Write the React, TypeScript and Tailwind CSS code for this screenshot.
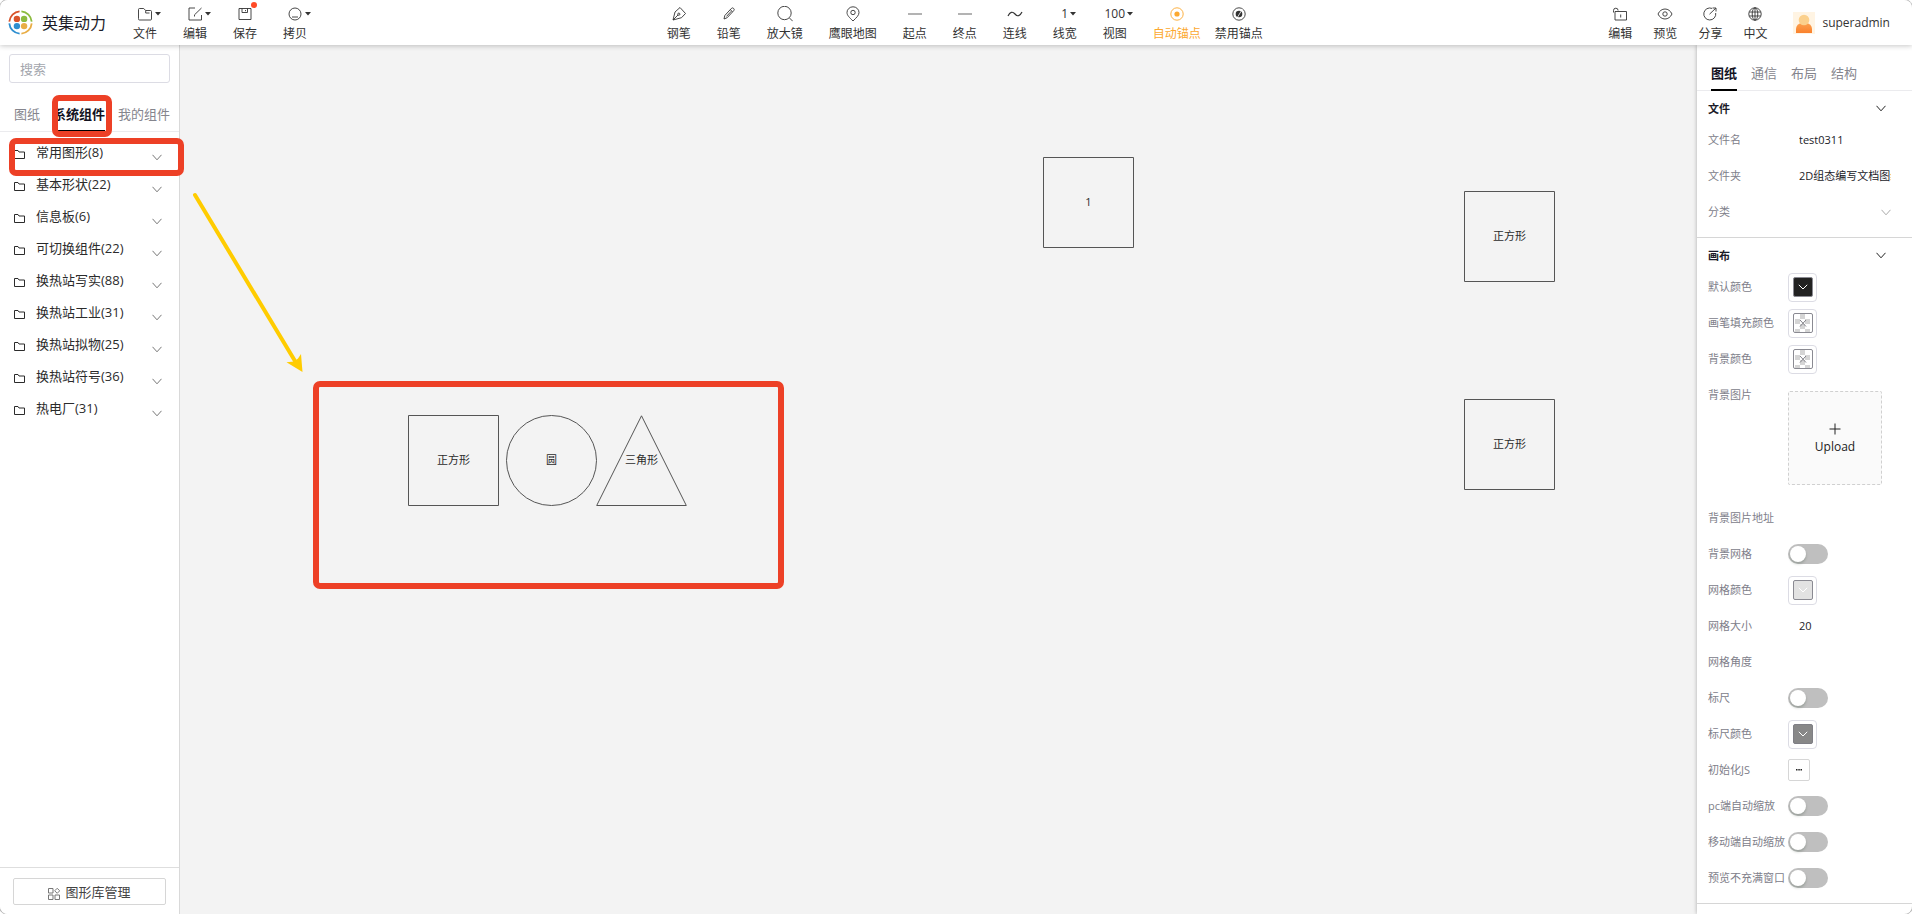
import React, { useState } from 'react';

const sans = "font-['Open_Sans','Noto_Sans_CJK_SC',sans-serif]";

type IconProps = { children: React.ReactNode; size?: number };

function Icon({ children, size = 16 }: IconProps) {
  return (
    <svg
      width={size}
      height={size}
      viewBox="0 0 16 16"
      fill="none"
      stroke="currentColor"
      strokeWidth="0.900"
      aria-hidden="true"
    >
      {children}
    </svg>
  );
}

const icons = {
  folder: (
    <Icon>
      <path d="M1.500 12.500v-9a1 1 0 0 1 1-1h4.200l2 2H13.500a1 1 0 0 1 1 1v7.500a1 1 0 0 1-1 1h-11a1 1 0 0 1-1-1zM8.700 4.500v2.500h3.800" />
    </Icon>
  ),
  edit: (
    <Icon>
      <path d="M8 2H2v12h12.500v-5" />
      <path d="M7.500 10.500v-1.700L14.500 2" />
    </Icon>
  ),
  save: (
    <Icon>
      <path d="M2 2.500h12v11H2zM5 2.500v4h5.500v-4M8.500 4v1.200" />
    </Icon>
  ),
  copy: (
    <Icon>
      <circle cx="8" cy="8" r="6" />
      <path d="M5 11h6" />
    </Icon>
  ),
  pen: (
    <Icon>
      <path d="M2 14 4 6l5-4.500 5.500 6-4 4.200z" />
      <path d="m2 14 5-5" />
      <circle cx="7.800" cy="8.200" r="1.100" />
    </Icon>
  ),
  pencil: (
    <Icon>
      <path d="M3 13l.8-3.500 6.500-7a1.600 1.600 0 0 1 2.400 2.200l-6.500 7zM9.200 3.600l2.300 2.100M10.300 5.200 5.500 10.400" />
    </Icon>
  ),
  magnifier: (
    <Icon>
      <circle cx="7.500" cy="7" r="6.700" />
      <path d="m12.500 12 3.200 3.200" />
    </Icon>
  ),
  pin: (
    <Icon>
      <path d="M8 15C4.500 11.500 2 9.500 2 6.500a6 5.700 0 0 1 12 0C14 9.500 11.500 11.500 8 15z" />
      <circle cx="8" cy="6.500" r="2.200" />
    </Icon>
  ),
  line: (
    <Icon>
      <path d="M1 8h14" stroke="#9a9a9a" strokeWidth="1.500" />
    </Icon>
  ),
  wave: (
    <Icon>
      <path d="M1 10C3 6 5.500 5 8 8s5 2 7-2" strokeWidth="1.200" />
    </Icon>
  ),
  anchor: (
    <Icon>
      <circle cx="8" cy="8" r="6.200" />
      <circle cx="8" cy="8" r="2.600" fill="currentColor" stroke="none" />
    </Icon>
  ),
  anchorOff: (
    <Icon>
      <circle cx="8" cy="8" r="6.200" />
      <circle cx="8" cy="8" r="3.300" fill="currentColor" stroke="none" />
      <path d="m6 12 5.500-9" stroke="#fff" strokeWidth="0.800" />
    </Icon>
  ),
  unlock: (
    <Icon>
      <path d="M1.500 6.500v-2a2.300 2.300 0 0 1 4.600 0M3 5.500h11.500v8.500H3zM8.700 8.500v3" />
    </Icon>
  ),
  eye: (
    <Icon>
      <path d="M1 8c1.500-3.200 4-5 7-5s5.500 1.800 7 5c-1.500 3.200-4 5-7 5s-5.500-1.800-7-5z" />
      <circle cx="8" cy="8" r="2.200" />
    </Icon>
  ),
  share: (
    <Icon>
      <path d="M10 2.400A6 6 0 1 0 13.700 7M7.500 8.200 13.800 2.200M10.500 2h3.500v3.500" />
    </Icon>
  ),
  globe: (
    <Icon>
      <circle cx="8" cy="8" r="6.200" />
      <ellipse cx="8" cy="8" rx="2.800" ry="6.200" />
      <path d="M8 1.800v12.400M2.300 6h11.400M2.300 10h11.400" />
    </Icon>
  ),
};

type ToolProps = {
  label: string;
  icon: React.ReactNode;
  caret?: boolean;
  dot?: boolean;
  active?: boolean;
};

function Tool({ label, icon, caret, dot, active }: ToolProps) {
  return (
    <button
      type="button"
      className={`flex flex-col items-center gap-1 pt-[3px] text-xs whitespace-nowrap ${active ? 'text-[#fca82f]' : 'text-[#333]'}`}
    >
      <span className="relative flex h-4 items-center leading-4">
        {icon}
        {caret && (
          <svg className="absolute top-1.5 left-full ml-0.5" width="6" height="4" viewBox="0 0 6 4" aria-hidden="true">
            <path d="M0 0h6L3 3.500z" fill="#333" />
          </svg>
        )}
        {dot && <span className="absolute -top-1 -right-1 size-1.5 rounded-full bg-[#ff4a26]" />}
      </span>
      <span className="leading-4">{label}</span>
    </button>
  );
}

function Logo() {
  return (
    <svg width="25" height="25" viewBox="0 0 25 25" fill="none" strokeWidth="1.800" aria-hidden="true">
      <path d="M1.300 11.600A11.300 11.300 0 0 1 11.600 1.300" stroke="#d9542b" />
      <path d="M13.400 1.300A11.300 11.300 0 0 1 23.700 11.600" stroke="#8bbb3f" />
      <path d="M23.700 13.400A11.300 11.300 0 0 1 13.400 23.700" stroke="#e9ad45" />
      <path d="M11.600 23.700A11.300 11.300 0 0 1 1.300 13.400" stroke="#2e8fd0" />
      <circle cx="8.900" cy="8.900" r="3.200" fill="#d9542b" />
      <circle cx="16.100" cy="8.900" r="3.200" fill="#8bbb3f" />
      <circle cx="8.900" cy="16.100" r="3.200" fill="#2e8fd0" />
      <circle cx="16.100" cy="16.100" r="3.200" fill="#e9ad45" />
    </svg>
  );
}

function Avatar() {
  return (
    <svg width="22" height="22" viewBox="0 0 22 22" aria-hidden="true">
      <defs>
        <linearGradient id="avatar-body" x1="0" y1="0" x2="0" y2="1">
          <stop offset="0" stopColor="#fba14f" />
          <stop offset="1" stopColor="#fa812d" />
        </linearGradient>
      </defs>
      <rect width="22" height="22" fill="#fff4e3" />
      <path d="M3 21v-4a6 6 0 0 1 6-6h4a6 6 0 0 1 6 6v4z" fill="url(#avatar-body)" />
      <circle cx="11" cy="8" r="5.300" fill="#fbd08c" />
    </svg>
  );
}

function Header() {
  return (
    <header className="relative z-10 flex h-[45px] shrink-0 items-center justify-between bg-white pr-[22px] pl-2 shadow-[0_1px_5px_rgba(0,0,0,0.22)]">
      <div className="flex items-center">
        <Logo />
        <h1 className="mr-[27px] ml-[9px] text-base leading-6 whitespace-nowrap text-[#1b1b28]">英集动力</h1>
        <nav className="flex gap-[26px]">
          <Tool label="文件" icon={icons.folder} caret />
          <Tool label="编辑" icon={icons.edit} caret />
          <Tool label="保存" icon={icons.save} dot />
          <Tool label="拷贝" icon={icons.copy} caret />
        </nav>
      </div>
      <div className="flex gap-[26px] pl-3.5">
        <Tool label="钢笔" icon={icons.pen} />
        <Tool label="铅笔" icon={icons.pencil} />
        <Tool label="放大镜" icon={icons.magnifier} />
        <Tool label="鹰眼地图" icon={icons.pin} />
        <Tool label="起点" icon={icons.line} />
        <Tool label="终点" icon={icons.line} />
        <Tool label="连线" icon={icons.wave} />
        <Tool label="线宽" icon="1" caret />
        <Tool label="视图" icon="100" caret />
        <div className="flex gap-3.5">
          <Tool label="自动锚点" icon={icons.anchor} active />
          <Tool label="禁用锚点" icon={icons.anchorOff} />
        </div>
      </div>
      <div className="flex items-center">
        <div className="flex gap-[21px]">
          <Tool label="编辑" icon={icons.unlock} />
          <Tool label="预览" icon={icons.eye} />
          <Tool label="分享" icon={icons.share} />
          <Tool label="中文" icon={icons.globe} />
        </div>
        <button type="button" className="ml-[26px] flex items-center gap-[7px] text-xs text-[#333]">
          <Avatar />
          superadmin
        </button>
      </div>
    </header>
  );
}

function Chevron({ className = '' }: { className?: string }) {
  return (
    <svg className={className} width="10" height="7" viewBox="0 0 10 7" fill="none" stroke="currentColor" aria-hidden="true">
      <path d="m.5.800 4.500 5 4.500-5" />
    </svg>
  );
}

type TabsProps = { tabs: string[]; initial: number; className: string };

function Tabs({ tabs, initial, className }: TabsProps) {
  const [active, setActive] = useState(initial);
  return (
    <div role="tablist" className={`flex shrink-0 border-b border-[#ebebee] text-[13px] whitespace-nowrap ${className}`}>
      {tabs.map((tab, i) => (
        <button
          key={tab}
          type="button"
          role="tab"
          aria-selected={i === active}
          onClick={() => setActive(i)}
          className={`-mb-px border-b-2 pb-1.5 leading-5 ${i === active ? 'border-black font-bold text-[#12121f]' : 'border-transparent text-[#85858d]'}`}
        >
          {tab}
        </button>
      ))}
    </div>
  );
}

const groups = [
  '常用图形(8)',
  '基本形状(22)',
  '信息板(6)',
  '可切换组件(22)',
  '换热站写实(88)',
  '换热站工业(31)',
  '换热站拟物(25)',
  '换热站符号(36)',
  '热电厂(31)',
];

function LibraryPanel() {
  return (
    <aside className="flex w-[180px] shrink-0 flex-col border-r border-[#d9d9d9] bg-white">
      <div className="flex px-[9px] pt-[9px]">
        <input
          type="search"
          aria-label="搜索"
          placeholder="搜索"
          className="h-[29px] w-full rounded-[3px] border border-[#dcdce4] px-2.5 text-[13px] outline-none placeholder:text-[#a3a6ad]"
        />
      </div>
      <Tabs tabs={['图纸', '系统组件', '我的组件']} initial={1} className="gap-[13px] pt-[21px] pl-3.5" />
      <ul className="flex-1 pt-[5px] text-[13px] text-[#2b2b2b]">
        {groups.map((name) => (
          <li key={name}>
            <button type="button" className="flex h-8 w-full items-center pr-[17px] pl-3.5 text-left">
              <svg className="mt-0.5" width="11" height="9" viewBox="0 0 11 9" fill="none" stroke="#2b2b2b" aria-hidden="true">
                <path d="M.5.500h3.500l1 1.500h5.500v6.500H.5z" />
              </svg>
              <span className="ml-[11px] flex-1">{name}</span>
              <Chevron className="mt-2 text-[#777]" />
            </button>
          </li>
        ))}
      </ul>
      <div className="border-t border-[#dedede] px-[13px] pt-2.5 pb-[9px]">
        <button
          type="button"
          className="flex h-[27px] w-full items-center justify-center gap-[5px] rounded-[2px] border border-[#d6d6d6] pt-[3px] text-[13px] text-[#444]"
        >
          <svg className="mt-0.5" width="12" height="12" viewBox="0 0 12 12" fill="none" stroke="#777" aria-hidden="true">
            <path d="M.5.500h4.500v4.500H.5zM.5 7h4.500v4.500H.5zM7 7h4.500v4.500H7zM9.200.300 11.700 2.800 9.200 5.300 6.700 2.800z" />
          </svg>
          图形库管理
        </button>
      </div>
    </aside>
  );
}

type NodeProps = { label: string; className: string; kind?: 'square' | 'circle' | 'triangle' };

function CanvasNode({ label, className, kind = 'square' }: NodeProps) {
  return (
    <div className={`absolute flex size-[91px] items-center justify-center text-[11px] text-[#2b2b2b] ${className}`}>
      <svg className="absolute inset-0" width="91" height="91" viewBox="0 0 91 91" fill="none" stroke="#555" aria-hidden="true">
        {kind === 'square' && <path d="M.5.500h90v90H.5z" />}
        {kind === 'circle' && <circle cx="45.500" cy="45.500" r="45" />}
        {kind === 'triangle' && <path d="M45.500.800 90.300 90.500H.7z" />}
      </svg>
      {label}
    </div>
  );
}

function Canvas() {
  return (
    <main className="relative min-w-0 flex-1 overflow-hidden bg-[#f3f3f3]">
      <CanvasNode label="1" className="top-[112px] left-[863px]" />
      <CanvasNode label="正方形" className="top-[146px] left-[1284px]" />
      <CanvasNode label="正方形" className="top-[354px] left-[1284px]" />
      <CanvasNode label="正方形" className="top-[370px] left-[228px]" />
      <CanvasNode label="圆" kind="circle" className="top-[370px] left-[326px]" />
      <CanvasNode label="三角形" kind="triangle" className="top-[370px] left-[416px]" />
    </main>
  );
}

function Section({ title, children }: { title: string; children: React.ReactNode }) {
  return (
    <section className="border-b border-[#d6d6d6] pb-[7px]">
      <button type="button" className="flex h-[31px] w-full items-center justify-between pt-1 pr-[26px] pl-[11px] font-bold text-[#1b1b28]">
        {title}
        <Chevron className="text-[#222]" />
      </button>
      {children}
    </section>
  );
}

type FieldProps = { label: string; id: string; children?: React.ReactNode; tall?: boolean };

function Field({ label, id, children, tall }: FieldProps) {
  return (
    <div className={`flex pr-[21px] pl-[11px] ${tall ? 'h-[123px] items-start' : 'h-9 items-center'}`}>
      <label htmlFor={id} className={`w-20 shrink-0 whitespace-nowrap text-[#80808a] ${tall ? 'leading-9' : ''}`}>
        {label}
      </label>
      {children}
    </div>
  );
}

function TextField({ label, id, value = '' }: { label: string; id: string; value?: string }) {
  return (
    <Field label={label} id={id}>
      <div className="min-w-0 flex-1 pl-[11px]">
        <input id={id} type="text" defaultValue={value} className="block w-full bg-transparent text-[#1b1b28] outline-none" />
      </div>
    </Field>
  );
}

function SwitchField({ label, id }: { label: string; id: string }) {
  return (
    <Field label={label} id={id}>
      <input
        id={id}
        type="checkbox"
        role="switch"
        className="flex h-5 w-10 appearance-none items-center rounded-full bg-[#bfbfbf] px-0.5 before:size-4 before:rounded-full before:bg-white before:shadow-[0_2px_3px_rgba(0,35,11,0.2)] checked:justify-end checked:bg-[#1890ff]"
      />
    </Field>
  );
}

type ColorProps = { label: string; id: string; swatch: string; empty?: boolean };

function ColorField({ label, id, swatch, empty }: ColorProps) {
  return (
    <Field label={label} id={id}>
      <button
        id={id}
        type="button"
        className="flex size-[29px] items-center justify-center rounded-[4px] border border-[#dcdce4] bg-white"
      >
        <span className={`flex size-5 items-center justify-center rounded-[2px] border ${swatch}`}>
          {empty ? (
            <svg width="18" height="18" viewBox="0 0 18 18" aria-hidden="true">
              <path
                d="M6 0h5v5H6zM1 5h5v5H1zM11 5h5v5h-5zM6 10h5v5H6zM1 15h5v3H1zM11 15h5v3h-5z"
                fill="#d5d5d5"
              />
              <path d="m6 6 6 6.500M12 6 6 12.500" stroke="#808087" fill="none" />
            </svg>
          ) : (
            <svg width="10" height="6" viewBox="0 0 10 6" fill="none" stroke="#fff" aria-hidden="true">
              <path d="m.8.800 4.200 4.200L9.200.800" />
            </svg>
          )}
        </span>
      </button>
    </Field>
  );
}

function PropertiesPanel() {
  return (
    <aside className="z-[5] flex w-[215px] shrink-0 flex-col bg-white text-[11px] leading-4 shadow-[0_0_4px_rgba(0,0,0,0.3)]">
      <Tabs tabs={['图纸', '通信', '布局', '结构']} initial={0} className="gap-3.5 pt-[18px] pl-3.5" />
      <Section title="文件">
        <TextField label="文件名" id="file-name" value="test0311" />
        <TextField label="文件夹" id="file-folder" value="2D组态编写文档图纸" />
        <Field label="分类" id="file-category">
          <div className="relative flex flex-1 items-center">
            <select id="file-category" className="w-full appearance-none bg-transparent outline-none" />
            <Chevron className="pointer-events-none absolute right-0 text-[#aaa]" />
          </div>
        </Field>
      </Section>
      <Section title="画布">
        <ColorField label="默认颜色" id="color-default" swatch="border-[#8a8a92] bg-[#222]" />
        <ColorField label="画笔填充颜色" id="color-fill" swatch="border-[#8a8a92] bg-white" empty />
        <ColorField label="背景颜色" id="color-background" swatch="border-[#8a8a92] bg-white" empty />
        <Field label="背景图片" id="background-image" tall>
          <button
            id="background-image"
            type="button"
            className="mt-3.5 flex size-[94px] flex-col items-center justify-center gap-1 rounded-[2px] border border-dashed border-[#d0d0d0] bg-[#fafafa] pt-0.5 text-xs text-[#222]"
          >
            <svg width="12" height="12" viewBox="0 0 12 12" stroke="#222" aria-hidden="true">
              <path d="M6 .500v11M.5 6h11" />
            </svg>
            Upload
          </button>
        </Field>
        <TextField label="背景图片地址" id="background-url" />
        <SwitchField label="背景网格" id="grid-visible" />
        <ColorField label="网格颜色" id="grid-color" swatch="border-[#8a8a92] bg-[#e2e2e2]" />
        <TextField label="网格大小" id="grid-size" value="20" />
        <TextField label="网格角度" id="grid-angle" />
        <SwitchField label="标尺" id="ruler-visible" />
        <ColorField label="标尺颜色" id="ruler-color" swatch="border-[#7f7f85] bg-[#888]" />
        <Field label="初始化JS" id="init-script">
          <button
            id="init-script"
            type="button"
            aria-label="初始化JS"
            className="flex size-[22px] items-center justify-center rounded-[2px] border border-[#d6d6d6] bg-white"
          >
            <svg width="6" height="2" viewBox="0 0 6 2" fill="#222" aria-hidden="true">
              <path d="M0 0h1.500v1.500H0zM2.300 0h1.500v1.500H2.300zM4.500 0H6v1.500H4.500z" />
            </svg>
          </button>
        </Field>
        <SwitchField label="pc端自动缩放" id="scale-pc" />
        <SwitchField label="移动端自动缩放" id="scale-mobile" />
        <SwitchField label="预览不充满窗口" id="preview-fit" />
      </Section>
    </aside>
  );
}

function Annotations() {
  return (
    <div className="pointer-events-none absolute inset-0 z-20" aria-hidden="true">
      <div className="absolute top-[95px] left-[52px] h-[42px] w-[60px] rounded-[7px] border-[6px] border-[#ed4026]" />
      <div className="absolute top-[138px] left-[9px] h-[38px] w-[175px] rounded-[7px] border-[6px] border-[#ed4026]" />
      <div className="absolute top-[381px] left-[313px] h-[208px] w-[471px] rounded-[7px] border-[6px] border-[#ed4026]" />
      <svg className="absolute top-[190px] left-[190px]" width="116" height="186" viewBox="0 0 116 186">
        <path d="M5 5 105 171" stroke="#fc0" strokeWidth="4" strokeLinecap="round" />
        <path d="M112.500 182 96.500 172.300 104 171.500 108 168.500 111 164z" fill="#fc0" />
      </svg>
    </div>
  );
}

export default function App() {
  return (
    <div
      className={`relative flex h-screen flex-col overflow-hidden rounded-lg bg-white shadow-[0_0_0_1px_#bdbdbd] ${sans}`}
    >
      <Header />
      <div className="flex min-h-0 flex-1">
        <LibraryPanel />
        <Canvas />
        <PropertiesPanel />
      </div>
      <Annotations />
    </div>
  );
}
